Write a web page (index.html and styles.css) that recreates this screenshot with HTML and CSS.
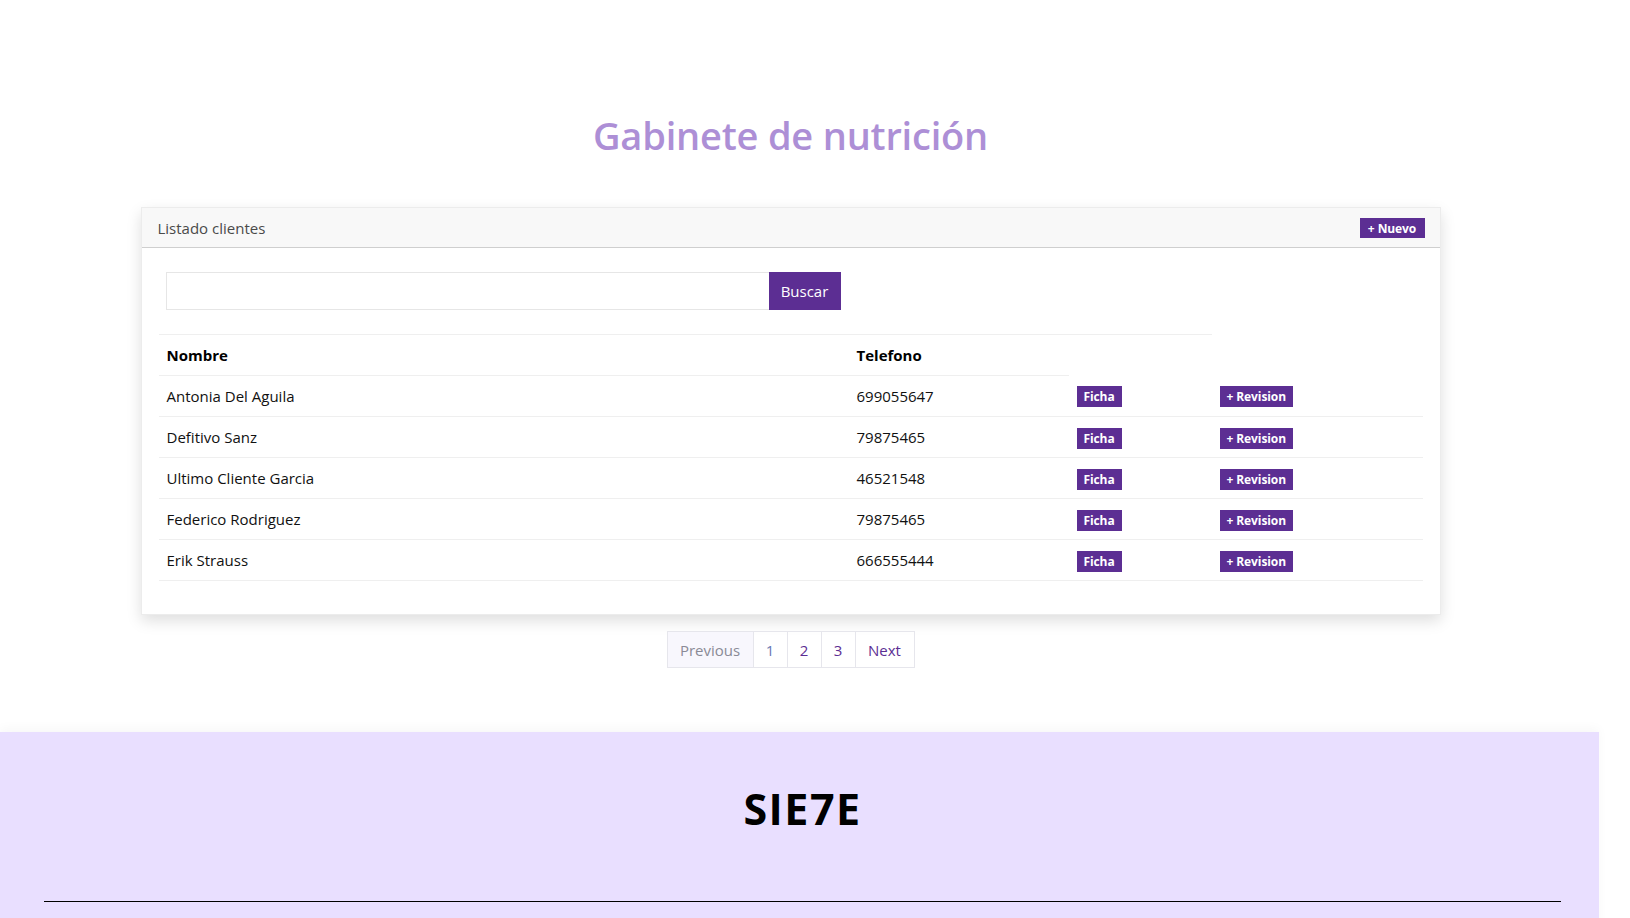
FILE: index.html
```html
<!DOCTYPE html>
<html lang="es">
<head>
<meta charset="utf-8">
<title>Gabinete de nutrición</title>
<link rel="stylesheet" href="styles.css">
</head>
<body>
<main class="page">
  <h1 class="title">Gabinete de nutrición</h1>
  <section class="card">
    <div class="card-header">
      <span class="card-title">Listado clientes</span>
      <a class="btn btn-new" href="#">+ Nuevo</a>
    </div>
    <div class="card-body">
      <table class="table">
        <colgroup>
          <col class="c-name"><col class="c-tel"><col class="c-ficha"><col class="c-rev">
        </colgroup>
        <tr class="search-row">
          <td colspan="3">
            <form class="search">
              <input class="search-input" type="text">
              <button class="search-btn" type="button">Buscar</button>
            </form>
          </td>
          <td class="blank"></td>
        </tr>
        <tr class="head-row">
          <th>Nombre</th>
          <th>Telefono</th>
          <td class="blank"></td>
          <td class="blank"></td>
        </tr>
        <tr class="data-row">
          <td>Antonia Del Aguila</td><td>699055647</td>
          <td><a class="btn btn-sm" href="#">Ficha</a></td>
          <td><a class="btn btn-sm" href="#">+ Revision</a></td>
        </tr>
        <tr class="data-row">
          <td>Defitivo Sanz</td><td>79875465</td>
          <td><a class="btn btn-sm" href="#">Ficha</a></td>
          <td><a class="btn btn-sm" href="#">+ Revision</a></td>
        </tr>
        <tr class="data-row">
          <td>Ultimo Cliente Garcia</td><td>46521548</td>
          <td><a class="btn btn-sm" href="#">Ficha</a></td>
          <td><a class="btn btn-sm" href="#">+ Revision</a></td>
        </tr>
        <tr class="data-row">
          <td>Federico Rodriguez</td><td>79875465</td>
          <td><a class="btn btn-sm" href="#">Ficha</a></td>
          <td><a class="btn btn-sm" href="#">+ Revision</a></td>
        </tr>
        <tr class="data-row">
          <td>Erik Strauss</td><td>666555444</td>
          <td><a class="btn btn-sm" href="#">Ficha</a></td>
          <td><a class="btn btn-sm" href="#">+ Revision</a></td>
        </tr>
      </table>
    </div>
  </section>
  <nav class="pager">
    <span class="pg pg-prev">Previous</span>
    <a class="pg pg-first" href="#">1</a>
    <a class="pg" href="#">2</a>
    <a class="pg" href="#">3</a>
    <a class="pg pg-next" href="#">Next</a>
  </nav>
</main>
<footer class="footer">
  <h2 class="brand">SIE7E</h2>
  <hr class="rule">
</footer>
</body>
</html>
```

FILE: styles.css
```css
* { box-sizing: border-box; }

html, body {
  margin: 0;
  padding: 0;
  background: #ffffff;
}

body {
  font-family: "Open Sans", "Noto Sans", sans-serif;
  font-size: 15px;
  color: #212529;
  overflow: hidden;
}

.page {
  width: 1581px;
  display: flex;
  flex-direction: column;
  align-items: center;
  padding-top: 110px;
}

.title {
  margin: 0;
  font-size: 38px;
  line-height: 50px;
  font-weight: 600;
  color: #ad8fd6;
  letter-spacing: -0.2px;
}

.card {
  width: 1300px;
  margin-top: 47px;
  border: 1px solid #ececec;
  background: #fff;
  box-shadow: 0 6px 14px rgba(0, 0, 0, 0.13);
}

.card-header {
  height: 40px;
  display: flex;
  align-items: center;
  justify-content: space-between;
  padding: 0 15px 0 16px;
  background: #f8f8f8;
  border-bottom: 1px solid #cfcfcf;
}

.card-title {
  color: #4a4a4a;
  font-size: 15px;
}

.btn {
  display: inline-flex;
  align-items: center;
  justify-content: center;
  background: #5c2e93;
  color: #fff;
  text-decoration: none;
  font-weight: 700;
  font-size: 12px;
  letter-spacing: -0.1px;
}

.btn-new {
  width: 65px;
  height: 20px;
  margin-top: 1px;
}

.card-body {
  padding: 16px 17px;
}

.table {
  width: 100%;
  table-layout: fixed;
  border-collapse: collapse;
  margin-bottom: 17px;
}

.c-name { width: 690px; }
.c-tel { width: 220px; }
.c-ficha { width: 143px; }
.c-rev { width: auto; }

.table td, .table th {
  padding: 8px;
  line-height: 24px;
  text-align: left;
  vertical-align: middle;
}

.search-row td {
  border-bottom: 1px solid #efefef;
}

.search-row td.blank,
.head-row td.blank {
  border-bottom: none;
}

.search-row td { padding-bottom: 24px; }
.search-row td.blank { padding: 0; }

.head-row th {
  border-bottom: 1px solid #efefef;
  font-weight: 700;
  color: #000;
  height: 40px;
}

.data-row td {
  border-bottom: 1px solid #efefef;
  height: 40px;
  color: #111;
}

.search {
  display: flex;
  margin-left: -1px;
}

.search-input {
  width: 603px;
  height: 38px;
  border: 1px solid #e6e6e6;
  border-right: none;
  outline: none;
  padding: 0 10px;
  font: inherit;
}

.search-btn {
  width: 72px;
  height: 38px;
  border: none;
  background: #5c2e93;
  color: #fff;
  font-family: inherit;
  font-size: 15px;
}

.btn-sm {
  display: flex;
  width: fit-content;
  height: 21px;
  margin-top: 2px;
  padding: 0 7px;
  line-height: 21px;
}

.pager {
  display: flex;
  margin-top: 16px;
  border: 1px solid #e6e6ec;
}

.pg {
  height: 35px;
  display: flex;
  align-items: center;
  justify-content: center;
  border-left: 1px solid #e6e6ec;
  color: #5c2e93;
  text-decoration: none;
  font-size: 15px;
}

.pg-prev {
  width: 85px;
  border-left: none;
  background: #f8f7fd;
  color: #8a8a96;
}

.pg-first { width: 34px; color: #6b78b5; }
.pg { min-width: 34px; }
.pg-next { width: 59px; }

.footer {
  width: 1599px;
  margin-top: 64px;
  height: 200px;
  background: #e9dfff;
  padding: 45px 38px 0 44px;
  box-shadow: 0 -4px 10px rgba(0, 0, 0, 0.03);
}

.brand {
  margin: 0;
  text-align: center;
  font-size: 43px;
  line-height: 64px;
  font-weight: 700;
  color: #000;
  letter-spacing: 1.5px;
}

.rule {
  margin: 60px 0 0;
  border: none;
  border-top: 1px solid #000;
}
```
